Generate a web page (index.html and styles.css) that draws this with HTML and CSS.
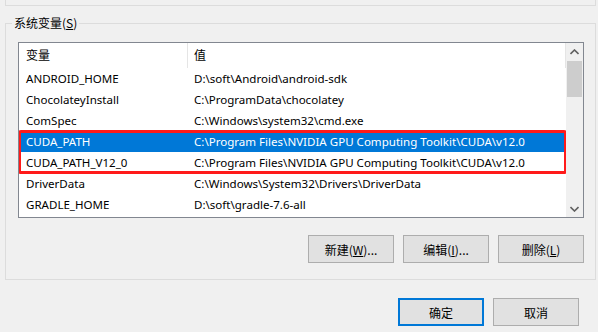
FILE: index.html
```html
<!DOCTYPE html>
<html lang="zh-CN">
<head>
<meta charset="utf-8">
<title>系统变量</title>
<link rel="stylesheet" href="styles.css">
</head>
<body>
<div class="prev-group"></div>
<fieldset class="group">
  <legend class="group-title">系统变量(<u>S</u>)</legend>
  <div class="list">
    <div class="list-body">
      <div class="head">
        <div class="hcell c1">变量</div>
        <div class="hcell c2">值</div>
      </div>
      <div class="row"><div class="cell c1">ANDROID_HOME</div><div class="cell c2">D:\soft\Android\android-sdk</div></div>
      <div class="row"><div class="cell c1">ChocolateyInstall</div><div class="cell c2">C:\ProgramData\chocolatey</div></div>
      <div class="row"><div class="cell c1">ComSpec</div><div class="cell c2">C:\Windows\system32\cmd.exe</div></div>
      <div class="highlight">
        <div class="row selected"><div class="cell c1">CUDA_PATH</div><div class="cell c2">C:\Program Files\NVIDIA GPU Computing Toolkit\CUDA\v12.0</div></div>
        <div class="row"><div class="cell c1">CUDA_PATH_V12_0</div><div class="cell c2">C:\Program Files\NVIDIA GPU Computing Toolkit\CUDA\v12.0</div></div>
      </div>
      <div class="row"><div class="cell c1">DriverData</div><div class="cell c2">C:\Windows\System32\Drivers\DriverData</div></div>
      <div class="row"><div class="cell c1">GRADLE_HOME</div><div class="cell c2">D:\soft\gradle-7.6-all</div></div>
    </div>
    <div class="scrollbar">
      <div class="arrow">
        <svg width="9" height="6" viewBox="0 0 9 6"><path d="M0.5 5 L4.5 1 L8.5 5" fill="none" stroke="#606060" stroke-width="1.6"/></svg>
      </div>
      <div class="track"><div class="thumb"></div></div>
      <div class="arrow">
        <svg width="9" height="6" viewBox="0 0 9 6"><path d="M0.5 1 L4.5 5 L8.5 1" fill="none" stroke="#606060" stroke-width="1.6"/></svg>
      </div>
    </div>
  </div>
  <div class="group-buttons">
    <button class="btn">新建(<u>W</u>)...</button>
    <button class="btn">编辑(<u>I</u>)...</button>
    <button class="btn">删除(<u>L</u>)</button>
  </div>
</fieldset>
<div class="dialog-buttons">
  <button class="btn default">确定</button>
  <button class="btn">取消</button>
</div>
</body>
</html>
```
FILE: styles.css
```css
html, body {
  margin: 0;
  padding: 0;
  background: #f0f0f0;
  font-family: "Noto Sans CJK SC", "Noto Sans", sans-serif;
  font-size: 12px;
  color: #000;
}

.prev-group {
  height: 5px;
  margin: 0 2px 0 5px;
  border: 1px solid #dcdcdc;
  border-top: none;
}

.group {
  margin: 9px 2px 0 5px;
  padding: 0 11px 16px 12px;
  border: 1px solid #dcdcdc;
  min-width: 0;
}

.group-title {
  margin-left: -6px;
  padding: 0 2px;
  line-height: 16px;
}

.list {
  margin-top: 11px;
  height: 176px;
  box-sizing: border-box;
  border: 1px solid #828790;
  background: #fff;
  display: flex;
}

.list-body {
  flex: 1;
  overflow: hidden;
}

.head {
  display: grid;
  grid-template-columns: 169px 1fr;
  height: 25px;
}

.hcell {
  line-height: 24px;
  border-right: 1px solid #e5e5e5;
}

.row {
  display: grid;
  grid-template-columns: 169px 1fr;
  height: 21px;
  line-height: 21px;
  white-space: nowrap;
  font-family: "Noto Sans", "Noto Sans CJK SC", sans-serif;
  font-size: 11.55px;
}

.c1 { padding-left: 7px; }
.c2 { padding-left: 6px; }

.row.selected {
  background: #0078d7;
  color: #fff;
}

.highlight {
  position: relative;
}

.highlight::after {
  content: "";
  position: absolute;
  top: -1px;
  bottom: -1px;
  left: -1px;
  right: -1px;
  border: 3px solid #ff1a1a;
  border-radius: 3px;
}

.scrollbar {
  width: 17px;
  background: #f0f0f0;
  display: flex;
  flex-direction: column;
}

.arrow {
  height: 17px;
  display: flex;
  align-items: center;
  justify-content: center;
}

.track {
  flex: 1;
}

.thumb {
  height: 36px;
  margin: 1px 1px 0 1px;
  background: #cdcdcd;
}

.group-buttons {
  margin-top: 17px;
  display: flex;
  justify-content: flex-end;
  gap: 9px;
}

.btn {
  width: 86px;
  height: 28px;
  box-sizing: border-box;
  border: 1px solid #adadad;
  background: #e1e1e1;
  font-family: "Noto Sans CJK SC", "Noto Sans", sans-serif;
  font-size: 12px;
  color: #000;
  padding: 0;
}

.btn.default {
  border: 2px solid #0078d7;
}

.dialog-buttons {
  margin-top: 18px;
  padding-right: 19px;
  display: flex;
  justify-content: flex-end;
  gap: 9px;
}
```
